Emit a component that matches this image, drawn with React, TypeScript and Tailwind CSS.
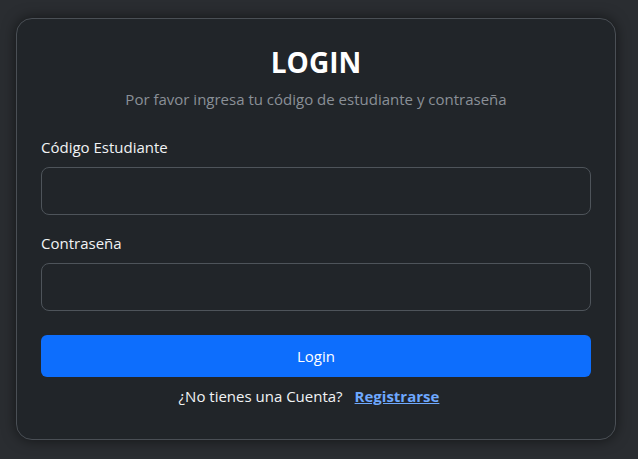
const font = { fontFamily: '"Open Sans", "Noto Sans", sans-serif' };

export default function App() {
  return (
    <div className="min-h-[459px] bg-[#2a2d31] pt-[18px] pl-4" style={font}>
      <div className="w-[600px] rounded-2xl border border-[#4a4f55] bg-[#212529] px-6 pt-6 pb-[31px] shadow-[0_0_14px_rgba(0,0,0,0.55)]">
        <h2 className="text-center text-[28px] leading-[38px] font-bold text-white mb-[6px]">LOGIN</h2>
        <p className="text-center text-[15px] leading-6 text-[#8a9097] mb-6">
          Por favor ingresa tu código de estudiante y contraseña
        </p>

        <label className="block text-[15px] leading-6 text-[#f1f3f5] mb-2">Código Estudiante</label>
        <input
          type="text"
          className="block w-full h-12 rounded-lg border border-[#4e545a] bg-[#212529] px-4 text-white outline-none mb-4"
        />

        <label className="block text-[15px] leading-6 text-[#f1f3f5] mb-2">Contraseña</label>
        <input
          type="password"
          className="block w-full h-12 rounded-lg border border-[#4e545a] bg-[#212529] px-4 text-white outline-none mb-6"
        />

        <button className="block w-full h-[42px] rounded-md bg-[#0d6efd] text-[15px] text-white">Login</button>

        <p className="mt-[7px] pr-[14px] text-center text-[15px] leading-6 text-[#f1f3f5]">
          ¿No tienes una Cuenta?
          <a href="#" className="ml-3 font-bold text-[#6ea8fe] underline">
            Registrarse
          </a>
        </p>
      </div>
    </div>
  );
}
